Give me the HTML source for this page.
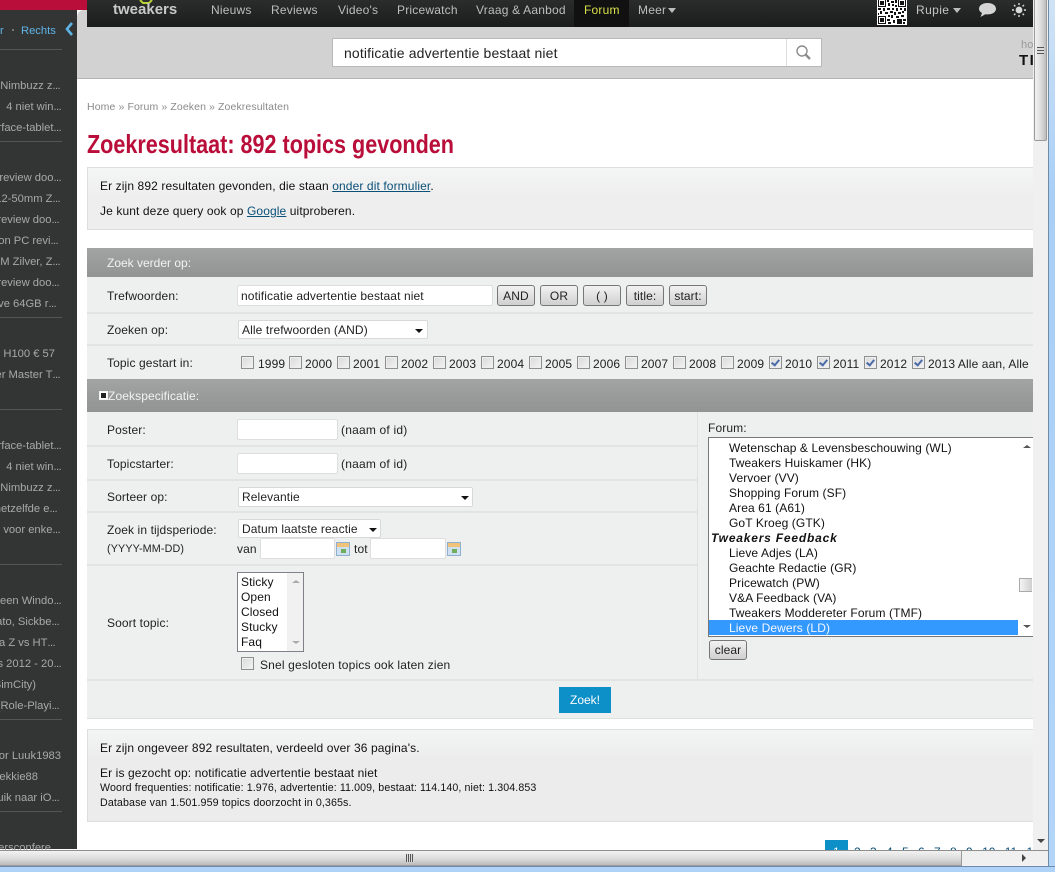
<!DOCTYPE html>
<html><head><meta charset="utf-8"><title>Zoekresultaat</title>
<style>
html,body{margin:0;padding:0;width:1055px;height:872px;overflow:hidden;background:#fff;font-family:"Liberation Sans",Arial,sans-serif;font-size:12px;color:#222}
.a{position:absolute}
.t{position:absolute;white-space:nowrap;line-height:14px;font-size:12px;letter-spacing:.11px}
.s{position:absolute;white-space:nowrap;line-height:14px;font-size:11.2px;color:#a8a8a8;text-align:right;right:994px;margin-top:1px}
.s u{text-decoration:none;letter-spacing:-.6px}
.sep{position:absolute;left:0;width:62px;height:1px;background:#555}
.n{position:absolute;white-space:nowrap;top:3px;line-height:14px;font-size:12px;color:#bdbdbd;letter-spacing:.2px}
.hd{position:absolute;left:87px;width:946px;background:linear-gradient(#a2a4a3,#929493)}
.ln{position:absolute;height:2px;background:#e2e3e3}
.in{position:absolute;background:#fff;border:1px solid #dedede;border-radius:2px;box-sizing:border-box}
.sel{position:absolute;background:#fff;border:1px solid #d8d8d8;box-sizing:border-box;border-radius:2px}
.ar{position:absolute;width:0;height:0;border-left:4px solid transparent;border-right:4px solid transparent;border-top:4px solid #111}
.b{position:absolute;box-sizing:border-box;border:1px solid #777;border-radius:3px;background:linear-gradient(#f2f2f2,#d0d0d0);text-align:center;line-height:20px;font-size:12px;color:#222;height:21px;width:38px;letter-spacing:.1px}
.c{position:absolute;width:11px;height:11px;border:1px solid #8e8f8f;background:linear-gradient(135deg,#d8d8d8,#f4f4f4);box-shadow:inset 0 0 0 1px #eee}
.k:after{content:"";position:absolute;left:3px;top:1px;width:3px;height:6px;border:solid #4a6aa8;border-width:0 2px 2px 0;transform:rotate(40deg)}
.l{position:absolute;white-space:nowrap;left:729px;line-height:15px;font-size:12px;color:#111;letter-spacing:.1px}
.cal{position:absolute;width:14px;height:14px;background:linear-gradient(#f1c27a 0 4px,#cfe0f2 4px);border:1px solid #8fb0cf;box-sizing:border-box}
.cal:after{content:"";position:absolute;left:4px;top:6px;width:5px;height:4px;background:#6fae5a}
a{color:#0a4f78;text-decoration:underline}
</style></head><body>

<!-- top and sidebar -->
<div class="a" style="left:0;top:0;width:87px;height:10px;background:#b90d3a"></div>
<div class="a" style="left:0;top:10px;width:77px;height:839px;background:#333535"></div>
<div class="a" style="left:77px;top:10px;width:10px;height:18px;background:#d2d2d2;border-top-left-radius:7px"></div>
<div class="a" style="left:87px;top:0;width:946px;height:27px;background:linear-gradient(#2b2c2c,#1b1c1c)"></div>
<div class="a" style="left:77px;top:27px;width:956px;height:51px;background:#d2d2d2;border-bottom:1px solid #b4b4b4"></div>

<span class="t" style="left:0;top:24px;color:#5fb4e6;font-size:11.2px;letter-spacing:0">r</span>
<span class="a" style="left:12px;top:29px;width:2px;height:2px;background:#777"></span>
<span class="t" style="left:21px;top:24px;color:#5fb4e6;font-size:11.2px;letter-spacing:0">Rechts</span>
<svg class="a" style="left:64px;top:21px" width="10" height="16"><path d="M8 2 L3 8 L8 14" fill="none" stroke="#5fb4e6" stroke-width="2.6"/></svg>

<div class="sep" style="top:49px"></div>
<span class="s" style="top:78px;right:995px">Nimbuzz z<u>...</u></span>
<span class="s" style="top:99px">4 niet win<u>...</u></span>
<span class="s" style="top:120px">rface-tablet<u>...</u></span>
<div class="sep" style="top:141px"></div>
<span class="s" style="top:170px">review doo<u>...</u></span>
<span class="s" style="top:191px;right:995px">12-50mm Z<u>...</u></span>
<span class="s" style="top:212px;right:996px">review doo<u>...</u></span>
<span class="s" style="top:233px;right:997px">on PC revi<u>...</u></span>
<span class="s" style="top:254px;right:995px">M Zilver, Z<u>...</u></span>
<span class="s" style="top:275px;right:996px">review doo<u>...</u></span>
<span class="s" style="top:296px;right:999px">ve 64GB r<u>...</u></span>
<div class="sep" style="top:317px"></div>
<span class="s" style="top:346px;right:1000px">s H100 € 57</span>
<span class="s" style="top:367px;right:995px">er Master T<u>...</u></span>
<div class="sep" style="top:409px"></div>
<span class="s" style="top:438px">rface-tablet<u>...</u></span>
<span class="s" style="top:459px">4 niet win<u>...</u></span>
<span class="s" style="top:480px;right:995px">Nimbuzz z<u>...</u></span>
<span class="s" style="top:501px;right:998px">hetzelfde e<u>...</u></span>
<span class="s" style="top:522px;right:995px">voor enke<u>...</u></span>
<div class="sep" style="top:564px"></div>
<span class="s" style="top:593px">een Windo<u>...</u></span>
<span class="s" style="top:614px;right:996px">ato, Sickbe<u>...</u></span>
<span class="s" style="top:635px;right:1000px">a Z vs HT<u>...</u></span>
<span class="s" style="top:656px">s 2012 - 20<u>...</u></span>
<span class="s" style="top:677px;right:1019px">SimCity)</span>
<span class="s" style="top:698px;right:996px">(Role-Playi<u>...</u></span>
<div class="sep" style="top:719px"></div>
<span class="s" style="top:748px">oor Luuk1983</span>
<span class="s" style="top:769px;right:1017px">oekkie88</span>
<span class="s" style="top:790px;right:996px">uik naar iO<u>...</u></span>
<div class="sep" style="top:811px"></div>
<span class="s" style="top:840px;right:1004px">ersconfere</span>

<!-- header -->
<svg class="a" style="left:139px;top:0" width="14" height="5"><path d="M1 0 L4 3 H10 L13 0" fill="none" stroke="#b5d334" stroke-width="2"/></svg>
<span class="t" style="left:113px;top:3px;font-size:15px;font-weight:bold;color:#c8c8c8;letter-spacing:0">tweakers</span>
<span class="n" style="left:211px">Nieuws</span>
<span class="n" style="left:271px">Reviews</span>
<span class="n" style="left:338px">Video's</span>
<span class="n" style="left:397px">Pricewatch</span>
<span class="n" style="left:476px">Vraag &amp; Aanbod</span>
<div class="a" style="left:574px;top:0;width:55px;height:27px;background:#111"></div>
<span class="n" style="left:584px;color:#d9e04a">Forum</span>
<span class="n" style="left:638px">Meer</span>
<div class="a" style="left:668px;top:8px;width:0;height:0;border-left:4px solid transparent;border-right:4px solid transparent;border-top:5px solid #bdbdbd"></div>

<svg class="a" style="left:877px;top:0" width="30" height="25" viewBox="0 0 30 25" shape-rendering="crispEdges"><rect width="30" height="25" fill="#fff"/><path fill="#111" d="M1 0h8v7H1zM21 0h8v7h-8zM1 16h8v8H1z"/><path fill="#fff" d="M2 0h6v6H2zM22 0h6v6h-6zM2 17h6v6H2z"/><path fill="#111" d="M3 1h4v4H3zM23 1h4v4h-4zM3 18h4v4H3zM10 0h2v2h-2zM14 1h3v2h-3zM18 0h2v3h-2zM11 3h2v3h-2zM15 4h2v2h-2zM18 5h2v2h-2zM1 8h3v2H1zM6 8h2v3H6zM10 8h3v2h-3zM15 8h2v2h-2zM19 8h2v3h-2zM23 8h2v2h-2zM27 8h2v3h-2zM3 11h2v3H3zM8 12h3v2H8zM13 11h3v2h-3zM17 12h2v3h-2zM21 12h3v2h-3zM25 11h2v2h-2zM1 13h1v2H1zM11 15h2v2h-2zM14 15h2v3h-2zM19 16h3v2h-3zM24 15h3v2h-3zM10 19h3v2h-3zM16 20h2v3h-2zM20 19h5v5h-5zM26 19h3v2h-3zM11 22h3v2h-3zM26 22h2v2h-2z"/></svg>
<span class="n" style="left:916px;color:#c5c5c5;letter-spacing:.4px">Rupie</span>
<div class="a" style="left:953px;top:8px;width:0;height:0;border-left:4px solid transparent;border-right:4px solid transparent;border-top:5px solid #bdbdbd"></div>
<svg class="a" style="left:978px;top:2px" width="19" height="16"><path d="M9.5 1C14.5 1 18 3.4 18 6.8 S14.5 12.4 9.5 12.4 C8.6 12.4 8 12.4 7.3 12.2 L2.5 15 L4 11 C2 10 1 8.6 1 6.8 C1 3.4 4.5 1 9.5 1Z" fill="#d5d5d5"/></svg>
<svg class="a" style="left:1011px;top:2px" width="16" height="16"><circle cx="8" cy="8" r="3.4" fill="#d8d8d8"/><path d="M8 1v2M8 13v2M1 8h2M13 8h2M3 3l1.4 1.4M11.6 11.6L13 13M3 13l1.4-1.4M11.6 4.4L13 3" stroke="#d8d8d8" stroke-width="1.4"/></svg>

<div class="a" style="left:332px;top:38px;width:488px;height:27px;background:#fff;border:1px solid #b8b8b8;border-radius:1px"></div>
<div class="a" style="left:786px;top:39px;width:1px;height:27px;background:#ddd"></div>
<span class="t" style="left:344px;top:45px;font-size:14px;line-height:16px;color:#222;letter-spacing:.14px">notificatie advertentie bestaat niet</span>
<svg class="a" style="left:795px;top:44px" width="18" height="18"><circle cx="7" cy="7" r="5" fill="none" stroke="#8c8c8c" stroke-width="1.4"/><path d="M10.5 10.5L15 15" stroke="#8c8c8c" stroke-width="2.4"/></svg>
<span class="t" style="left:1021px;top:38px;font-size:11px;color:#999">ho</span>
<span class="t" style="left:1019px;top:53px;font-size:15px;font-weight:bold;color:#111;line-height:16px;letter-spacing:1.5px">TI</span>

<!-- content -->
<span class="t" style="left:87px;top:100px;font-size:10.5px;color:#8a8a8a">Home » Forum » Zoeken » Zoekresultaten</span>
<span class="t" style="left:87px;top:129px;font-size:26px;line-height:30px;font-weight:bold;color:#b90d3a;letter-spacing:0;transform:scaleX(.83);transform-origin:0 0">Zoekresultaat: 892 topics gevonden</span>

<div class="a" style="left:87px;top:167px;width:946px;height:61px;box-sizing:content-box;background:linear-gradient(#f4f5f5,#eeeeee 30px);border:1px solid #dedede;border-right:0"></div>
<span class="t" style="left:100px;top:179px;color:#111">Er zijn 892 resultaten gevonden, die staan <a>onder dit formulier</a>.</span>
<span class="t" style="left:100px;top:204px;color:#111">Je kunt deze query ook op <a>Google</a> uitproberen.</span>

<!-- form -->
<div class="a" style="left:87px;top:277px;width:946px;height:441px;background:#eeefef"></div>
<div class="hd" style="top:248px;height:29px"></div>
<span class="t" style="left:107px;top:256px;color:#f2f2f2;letter-spacing:0">Zoek verder op:</span>
<div class="ln" style="left:87px;top:312px;width:946px"></div>
<div class="ln" style="left:87px;top:344px;width:946px"></div>
<div class="hd" style="top:379px;height:33px"></div>
<div class="a" style="left:99px;top:391px;width:7px;height:7px;border:1px solid #f4f4f4;background:#222;box-shadow:inset 0 0 0 1px #fff"></div>
<span class="t" style="left:108px;top:389px;color:#f2f2f2">Zoekspecificatie:</span>

<span class="t" style="left:107px;top:289px">Trefwoorden:</span>
<div class="in" style="left:237px;top:285px;width:256px;height:21px"></div>
<span class="t" style="left:241px;top:289px">notificatie advertentie bestaat niet</span>
<div class="b" style="left:497px;top:285px">AND</div>
<div class="b" style="left:540px;top:285px">OR</div>
<div class="b" style="left:583px;top:285px">( )</div>
<div class="b" style="left:626px;top:285px">title:</div>
<div class="b" style="left:669px;top:285px">start:</div>

<span class="t" style="left:107px;top:323px">Zoeken op:</span>
<div class="sel" style="left:238px;top:320px;width:190px;height:19px"></div>
<span class="t" style="left:242px;top:323px">Alle trefwoorden (AND)</span>
<div class="ar" style="left:415px;top:329px"></div>

<span class="t" style="left:107px;top:356px">Topic gestart in:</span>
<div class="c" style="left:241px;top:356px"></div><span class="t" style="left:258px;top:357px">1999</span>
<div class="c" style="left:289px;top:356px"></div><span class="t" style="left:305px;top:357px">2000</span>
<div class="c" style="left:337px;top:356px"></div><span class="t" style="left:353px;top:357px">2001</span>
<div class="c" style="left:385px;top:356px"></div><span class="t" style="left:401px;top:357px">2002</span>
<div class="c" style="left:433px;top:356px"></div><span class="t" style="left:449px;top:357px">2003</span>
<div class="c" style="left:481px;top:356px"></div><span class="t" style="left:497px;top:357px">2004</span>
<div class="c" style="left:529px;top:356px"></div><span class="t" style="left:545px;top:357px">2005</span>
<div class="c" style="left:577px;top:356px"></div><span class="t" style="left:593px;top:357px">2006</span>
<div class="c" style="left:625px;top:356px"></div><span class="t" style="left:641px;top:357px">2007</span>
<div class="c" style="left:673px;top:356px"></div><span class="t" style="left:689px;top:357px">2008</span>
<div class="c" style="left:721px;top:356px"></div><span class="t" style="left:737px;top:357px">2009</span>
<div class="c k" style="left:769px;top:356px"></div><span class="t" style="left:785px;top:357px">2010</span>
<div class="c k" style="left:817px;top:356px"></div><span class="t" style="left:833px;top:357px">2011</span>
<div class="c k" style="left:864px;top:356px"></div><span class="t" style="left:880px;top:357px">2012</span>
<div class="c k" style="left:912px;top:356px"></div><span class="t" style="left:928px;top:357px">2013 Alle aan, Alle</span>

<!-- left column -->
<div class="a" style="left:697px;top:412px;width:1px;height:268px;background:#dfe0e0"></div>
<div class="ln" style="left:87px;top:445px;width:610px"></div>
<div class="ln" style="left:87px;top:479px;width:610px"></div>
<div class="ln" style="left:87px;top:511px;width:610px"></div>
<div class="ln" style="left:87px;top:564px;width:610px"></div>
<div class="ln" style="left:87px;top:679px;width:946px"></div>

<span class="t" style="left:107px;top:423px">Poster:</span>
<div class="in" style="left:237px;top:419px;width:101px;height:21px"></div>
<span class="t" style="left:341px;top:423px;letter-spacing:.2px">(naam of id)</span>
<span class="t" style="left:107px;top:457px">Topicstarter:</span>
<div class="in" style="left:237px;top:453px;width:101px;height:21px"></div>
<span class="t" style="left:341px;top:457px;letter-spacing:.2px">(naam of id)</span>
<span class="t" style="left:107px;top:490px">Sorteer op:</span>
<div class="sel" style="left:238px;top:487px;width:235px;height:20px"></div>
<span class="t" style="left:242px;top:490px">Relevantie</span>
<div class="ar" style="left:461px;top:496px"></div>
<span class="t" style="left:107px;top:523px">Zoek in tijdsperiode:</span>
<span class="t" style="left:107px;top:542px;font-size:10.8px">(YYYY-MM-DD)</span>
<div class="sel" style="left:238px;top:519px;width:143px;height:19px"></div>
<span class="t" style="left:242px;top:522px">Datum laatste reactie</span>
<div class="ar" style="left:369px;top:528px"></div>
<span class="t" style="left:237px;top:542px">van</span>
<div class="in" style="left:260px;top:538px;width:75px;height:21px"></div>
<div class="cal" style="left:336px;top:542px"></div>
<span class="t" style="left:354px;top:542px">tot</span>
<div class="in" style="left:370px;top:538px;width:76px;height:21px"></div>
<div class="cal" style="left:447px;top:542px"></div>

<span class="t" style="left:107px;top:616px">Soort topic:</span>
<div class="a" style="left:237px;top:572px;width:65px;height:78px;background:#fff;border:1px solid #7f8088"></div>
<div class="a" style="left:287px;top:573px;width:16px;height:78px;background:#f1f1f1"></div>
<div class="l" style="left:241px;top:575px">Sticky</div>
<div class="l" style="left:241px;top:590px">Open</div>
<div class="l" style="left:241px;top:605px">Closed</div>
<div class="l" style="left:241px;top:620px">Stucky</div>
<div class="l" style="left:241px;top:635px">Faq</div>
<div class="a" style="left:292px;top:580px;width:0;height:0;border-left:4px solid transparent;border-right:4px solid transparent;border-bottom:3px solid #aaa"></div>
<div class="a" style="left:292px;top:641px;width:0;height:0;border-left:4px solid transparent;border-right:4px solid transparent;border-top:3px solid #aaa"></div>
<div class="c" style="left:241px;top:657px"></div>
<span class="t" style="left:260px;top:658px;letter-spacing:.16px">Snel gesloten topics ook laten zien</span>

<!-- right column -->
<span class="t" style="left:708px;top:421px">Forum:</span>
<div class="a" style="left:708px;top:437px;width:324px;height:198px;background:#fff;border:1px solid #777;border-right:0;box-sizing:content-box;overflow:hidden"></div>
<div class="l" style="top:441px">Wetenschap &amp; Levensbeschouwing (WL)</div>
<div class="l" style="top:456px">Tweakers Huiskamer (HK)</div>
<div class="l" style="top:471px">Vervoer (VV)</div>
<div class="l" style="top:486px">Shopping Forum (SF)</div>
<div class="l" style="top:501px">Area 61 (A61)</div>
<div class="l" style="top:516px">GoT Kroeg (GTK)</div>
<div class="l" style="left:711px;top:531px;font-weight:bold;font-style:italic;letter-spacing:.8px">Tweakers Feedback</div>
<div class="l" style="top:546px">Lieve Adjes (LA)</div>
<div class="l" style="top:561px">Geachte Redactie (GR)</div>
<div class="l" style="top:576px">Pricewatch (PW)</div>
<div class="l" style="top:591px">V&amp;A Feedback (VA)</div>
<div class="l" style="top:606px">Tweakers Moddereter Forum (TMF)</div>
<div class="a" style="left:709px;top:620px;width:309px;height:15px;background:#3399ff"></div>
<div class="l" style="top:621px;color:#f4f8ff">Lieve Dewers (LD)</div>
<div class="a" style="left:1019px;top:578px;width:13px;height:14px;background:linear-gradient(90deg,#f4f4f4,#d0d0d0);border:1px solid #aaa;border-right:0;box-sizing:border-box"></div>
<div class="a" style="left:1023px;top:445px;width:0;height:0;border-left:4px solid transparent;border-right:4px solid transparent;border-bottom:3px solid #555"></div>
<div class="a" style="left:1023px;top:625px;width:0;height:0;border-left:4px solid transparent;border-right:4px solid transparent;border-top:3px solid #555"></div>
<div class="b" style="left:709px;top:640px;height:20px;line-height:19px">clear</div>

<div class="a" style="left:559px;top:687px;width:52px;height:26px;background:#0d8fc7;color:#fff;text-align:center;line-height:26px;font-size:12px">Zoek!</div>

<!-- bottom block -->
<div class="a" style="left:87px;top:718px;width:946px;height:1px;background:#dfe0e0"></div>
<div class="a" style="left:87px;top:729px;width:946px;height:91px;background:linear-gradient(#f3f4f4,#ececec 30px);border:1px solid #dedede;border-right:0"></div>
<span class="t" style="left:100px;top:741px;color:#111">Er zijn ongeveer 892 resultaten, verdeeld over 36 pagina's.</span>
<span class="t" style="left:100px;top:766px;color:#111">Er is gezocht op: notificatie advertentie bestaat niet</span>
<span class="t" style="left:100px;top:781px;font-size:10.65px;color:#111;letter-spacing:.1px">Woord frequenties: notificatie: 1.976, advertentie: 11.009, bestaat: 114.140, niet: 1.304.853</span>
<span class="t" style="left:100px;top:796px;font-size:10.7px;color:#111;letter-spacing:.1px">Database van 1.501.959 topics doorzocht in 0,365s.</span>

<div class="a" style="left:825px;top:840px;width:23px;height:10px;background:#0d8fc7;overflow:hidden"><span class="t" style="left:8px;top:5px;color:#fff">1</span></div>
<div class="a" style="left:854px;top:845px;width:179px;height:5px;overflow:hidden;color:#0a4f78;font-size:12px;line-height:14px;white-space:nowrap;word-spacing:6px">2 3 4 5 6 7 8 9 10 11 1</div>

<!-- window scrollbars -->
<div class="a" style="left:1033px;top:0;width:15px;height:851px;background:#f0f0f0"></div>
<div class="a" style="left:1034px;top:0;width:13px;height:141px;box-sizing:border-box;background:linear-gradient(90deg,#f2f2f2,#dcdcdc 55%,#bdbdbd);border:1px solid #9a9a9a;border-top:0;border-radius:0 0 2px 2px"></div>
<div class="a" style="left:1037px;top:47px;width:7px;height:7px;background:repeating-linear-gradient(#555 0 1px,#ddd 1px 3px)"></div>
<div class="a" style="left:1037px;top:839px;width:0;height:0;border-left:4px solid transparent;border-right:4px solid transparent;border-top:4px solid #444"></div>
<div class="a" style="left:0;top:850px;width:1048px;height:16px;background:#f0f0f0;border-top:1px solid #8f8f8f;box-sizing:border-box"></div>
<div class="a" style="left:0;top:851px;width:962px;height:15px;background:linear-gradient(#f2f2f2,#dcdcdc 55%,#bbb);border-bottom:1px solid #9a9a9a;border-right:1px solid #9a9a9a;box-sizing:border-box"></div>
<div class="a" style="left:406px;top:854px;width:8px;height:8px;background:repeating-linear-gradient(90deg,#555 0 1px,#ddd 1px 2px)"></div>
<div class="a" style="left:1022px;top:854px;width:0;height:0;border-top:4px solid transparent;border-bottom:4px solid transparent;border-left:4px solid #444"></div>
<div class="a" style="left:1048px;top:0;width:7px;height:872px;background:linear-gradient(#d0e3f6,#a9cff7 22%,#b3d5fa);border-left:1px solid #6f8ca8;box-sizing:border-box"></div>
<div class="a" style="left:0;top:866px;width:1055px;height:6px;background:#aed2f8;border-top:1px solid #6f8ca8;box-sizing:border-box"></div>
</body></html>
